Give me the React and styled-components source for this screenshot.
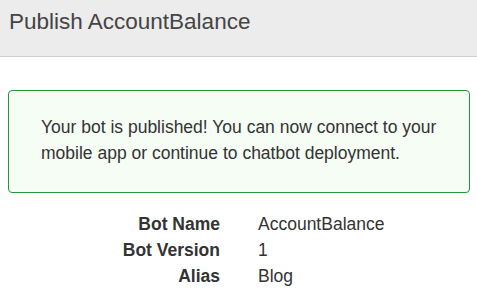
import React from 'react';
import styled, { createGlobalStyle } from 'styled-components';

const GlobalStyle = createGlobalStyle`
    body {
        margin: 0;
        background: #fff;
        font-family: "Liberation Sans", Arial, sans-serif;
        color: #333;
    }
`;

const Header = styled.div`
    height: 57px;
    box-sizing: border-box;
    background: #ececec;
    border-bottom: 1px solid #cfcfcf;
    padding: 6px 9px 0;
`;

const Title = styled.h1`
    margin: 0;
    font-size: 22.5px;
    line-height: 32px;
    font-weight: normal;
    color: #444;
`;

const Body = styled.div`
    padding: 33px 7px 0 8px;
`;

const Notice = styled.div`
    border: 1px solid #1e9a3c;
    border-radius: 4px;
    background: #f5fdf5;
    padding: 24px 32px 26px;
    font-size: 17.5px;
    line-height: 25.7px;
`;

const Details = styled.div`
    display: grid;
    grid-template-columns: 212px 1fr;
    column-gap: 38px;
    margin-top: 19px;
    font-size: 17.5px;
    line-height: 25.7px;
`;

const Label = styled.div`
    text-align: right;
    font-weight: bold;
`;

const Value = styled.div``;

const details = [
    ['Bot Name', 'AccountBalance'],
    ['Bot Version', '1'],
    ['Alias', 'Blog'],
];

const App = () => {
    return (
        <>
            <GlobalStyle/>
            <Header>
                <Title>Publish AccountBalance</Title>
            </Header>
            <Body>
                <Notice>
                    Your bot is published! You can now connect to your mobile app or continue to chatbot deployment.
                </Notice>
                <Details>
                    {details.map(([label, value]) => (
                        <React.Fragment key={label}>
                            <Label>{label}</Label>
                            <Value>{value}</Value>
                        </React.Fragment>
                    ))}
                </Details>
            </Body>
        </>
    );
};

export default App;
